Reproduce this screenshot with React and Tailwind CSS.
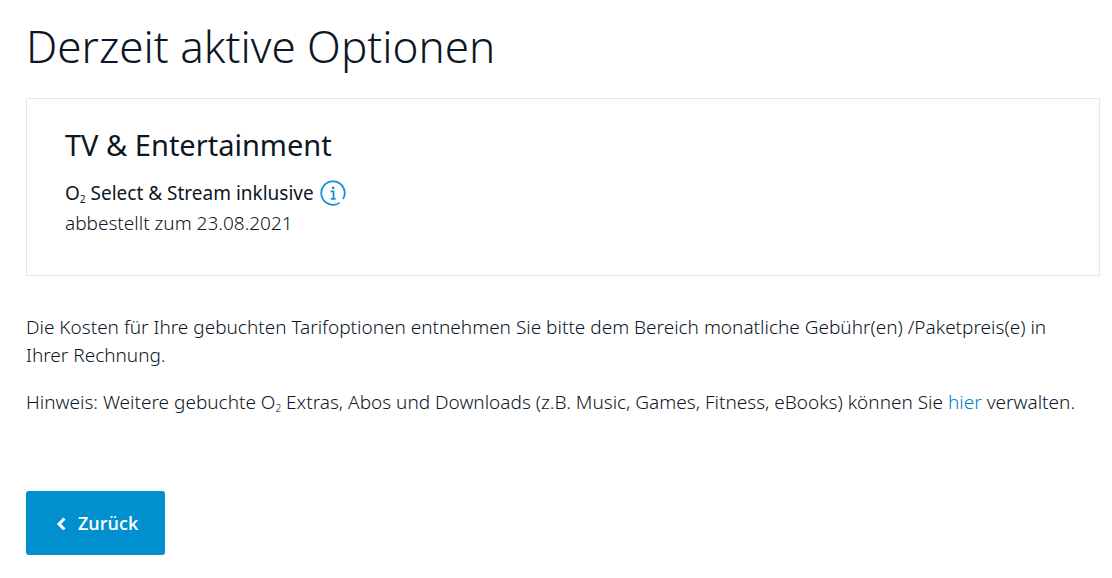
export default function App() {
  return (
    <main className="min-h-screen bg-white pl-[26px] pr-3 pt-[18px] pb-6 font-['Noto_Sans','Open_Sans',sans-serif] text-[19px] font-light text-[#0c1624]">
      <h1 className="text-[44px] leading-[56px]">Derzeit aktive Optionen</h1>
      <section className="mt-6 border border-[#e6e6e6] px-[38px] pt-[26px] pb-[37px]">
        <h2 className="text-[29px] leading-10 font-normal">TV &amp; Entertainment</h2>
        <div className="mt-[13px] flex items-center gap-[6px] leading-[30px]">
          <span className="font-normal">O<sub className="text-[10px] leading-none">2</sub> Select &amp; Stream inklusive</span>
          <button type="button" aria-label="Information" className="text-[#1b90d0]">
            <svg viewBox="0 0 26 26" className="size-[26px]" fill="none" stroke="currentColor" strokeWidth="1.8">
              <path d="M20.4 22.1A11.7 11.7 0 1 1 23 19.1" />
              <path d="M10.6 11.3h2.9v7.6M10.8 18.9h4.8" />
              <circle cx="13.2" cy="7.9" r="1.3" fill="currentColor" stroke="none" />
              <path d="M19.2 21.2l2.4 2.4" stroke="white" strokeWidth="1.6" />
            </svg>
          </button>
        </div>
        <p className="leading-[30px]">abbestellt zum 23.08.2021</p>
      </section>
      <div className="mt-[37px] space-y-[19px] pr-3 leading-7">
        <p>Die Kosten für Ihre gebuchten Tarifoptionen entnehmen Sie bitte dem Bereich monatliche Gebühr(en) /Paketpreis(e) in Ihrer Rechnung.</p>
        <p>Hinweis: Weitere gebuchte O<sub className="text-[10px] leading-none">2</sub> Extras, Abos und Downloads (z.B. Music, Games, Fitness, eBooks) können Sie <a href="#" className="text-[#0080c8]">hier</a> verwalten.</p>
      </div>
      <button type="button" className="mt-[75px] flex h-16 items-center gap-[10px] rounded-[3px] bg-[#0090d0] px-7 pr-[27px] font-['Open_Sans',sans-serif] text-[18px] font-semibold text-white">
        <svg viewBox="0 0 14 14" className="size-[14px]" fill="none" stroke="currentColor" strokeWidth="3"><path d="M10.5 2.5 5 8l5.5 5.5" /></svg>
        Zurück
      </button>
    </main>
  );
}
